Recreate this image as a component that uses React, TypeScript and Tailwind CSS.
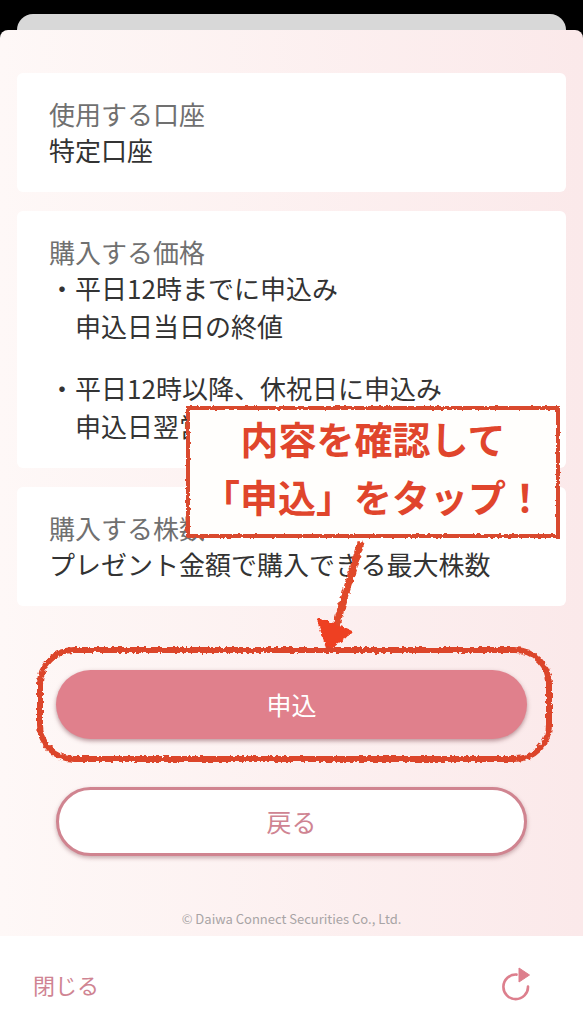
import React from 'react';

const prices = [
  { when: '平日12時までに申込み', price: '申込日当日の終値' },
  { when: '平日12時以降、休祝日に申込み', price: '申込日翌営' },
];

function Card({ title, children }: { title: string; children: React.ReactNode }) {
  return (
    <section className="bg-white rounded-md px-8 pt-6 pb-[23px] text-[26px]">
      <h2 className="text-[#707070] leading-[34px]">{title}</h2>
      <div className="text-[#333333] leading-[38px]">{children}</div>
    </section>
  );
}

// crayon edge shared by the red marks
function CrayonFilters() {
  return (
    <svg className="absolute w-0 h-0" aria-hidden="true">
      <filter id="crayon" filterUnits="userSpaceOnUse" x="-20" y="-20" width="2000" height="400">
        <feTurbulence type="fractalNoise" baseFrequency="0.28" numOctaves="2" seed="4" result="noise" />
        <feDisplacementMap in="SourceGraphic" in2="noise" scale="5" xChannelSelector="R" yChannelSelector="G" />
      </filter>
      <filter id="crayon-thin" filterUnits="userSpaceOnUse" x="-20" y="-20" width="2000" height="400">
        <feTurbulence type="fractalNoise" baseFrequency="0.3" numOctaves="2" seed="9" result="noise" />
        <feDisplacementMap in="SourceGraphic" in2="noise" scale="3" xChannelSelector="R" yChannelSelector="G" />
      </filter>
    </svg>
  );
}

function Callout() {
  return (
    <div className="absolute right-2 bottom-[70px] w-[370px] h-[128px] bg-[#fffefc] text-[#e0452c] text-[38px] leading-[58px] font-bold text-center pt-px whitespace-nowrap">
      <p>内容を確認して</p>
      <p>「申込」をタップ！</p>
      <svg className="absolute inset-0 w-full h-full overflow-visible" aria-hidden="true">
        <rect width="100%" height="100%" fill="none" stroke="#d9482f" strokeWidth="4" filter="url(#crayon-thin)" />
      </svg>
      <svg className="absolute left-[120px] top-[130px] overflow-visible" width="60" height="116" aria-hidden="true">
        <g filter="url(#crayon)" fill="#ee4123" stroke="#ee4123" strokeLinejoin="round">
          <path d="M53 4L28 88" fill="none" stroke="#e0492c" strokeWidth="7" />
          <path d="M10 82L27 87L43 94L31 103L20 112L16 98Z" strokeWidth="3" />
        </g>
      </svg>
    </div>
  );
}

export default function App() {
  return (
    <div className="min-h-screen flex flex-col bg-black pt-[14px] font-['Noto_Sans_CJK_JP','Noto_Sans',sans-serif]">
      <CrayonFilters />
      <div className="h-4 mx-[17px] rounded-t-2xl bg-[#d8d8d8]" />

      <main className="flex-1 flex flex-col rounded-t-lg bg-linear-to-r from-[#fef8f7] to-[#fbe9ea] px-[17px] pt-[43px]">
        <div className="relative flex flex-col gap-[19px]">
          <Card title="使用する口座">
            <p>特定口座</p>
          </Card>
          <Card title="購入する価格">
            <ul className="flex flex-col gap-6">
              {prices.map((p) => (
                <li key={p.when}>
                  <p>・{p.when}</p>
                  <p className="pl-[26px]">{p.price}</p>
                </li>
              ))}
            </ul>
          </Card>
          <Card title="購入する株数">
            <p>プレゼント金額で購入できる最大株数</p>
          </Card>
          <Callout />
        </div>

        <div className="mt-16 mx-[39px] flex flex-col gap-12 text-[25px]">
          <div className="relative flex">
            <button className="flex-1 h-[69px] rounded-full bg-[#e0808c] text-white shadow-[0_2px_4px_rgba(120,60,70,0.5)]">
              申込
            </button>
            <div className="absolute -left-4 -right-[22px] -inset-y-5 pointer-events-none">
              <svg className="w-full h-full overflow-visible" aria-hidden="true">
                <rect width="100%" height="100%" rx="34" fill="none" stroke="#dc452b" strokeWidth="6" filter="url(#crayon)" />
              </svg>
            </div>
          </div>
          <button className="h-[69px] rounded-full border-3 border-[#d08490] bg-white text-[#cf8492] shadow-[0_2px_4px_rgba(120,60,70,0.4)]">
            戻る
          </button>
        </div>

        <p className="mt-auto pb-[7px] text-center text-[13px] leading-5 text-[#a8a4a5]">
          © Daiwa Connect Securities Co., Ltd.
        </p>
      </main>

      <footer className="h-[88px] bg-white pl-[33px] pr-[53px] pt-2 flex items-center justify-between">
        <button className="text-[22px] text-[#cf8492]">閉じる</button>
        <button aria-label="再読み込み">
          <svg width="28" height="34" viewBox="0 0 28 34" fill="none">
            <path d="M14.5 7.6A12.3 12.3 0 1 0 26 19.5" stroke="#dd7f8d" strokeWidth="2.6" strokeLinecap="round" />
            <path d="M17 1L27.500 8L17 15Z" fill="#dd7f8d" stroke="#dd7f8d" strokeWidth="1" strokeLinejoin="round" />
          </svg>
        </button>
      </footer>
    </div>
  );
}
